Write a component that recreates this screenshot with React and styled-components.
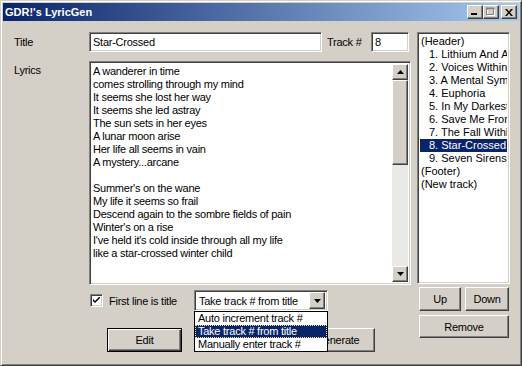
import React from "react";
import styled, { createGlobalStyle } from "styled-components";

const GlobalStyle = createGlobalStyle`
  html, body {
    margin: 0;
    padding: 0;
    background: #d4d0c8;
  }
  body {
    font-family: "Liberation Sans", Arial, sans-serif;
    font-size: 11px;
    letter-spacing: -0.25px;
    color: #000;
  }
`;

const raised = `
  border: 1px solid;
  border-color: #fff #404040 #404040 #fff;
  box-shadow: inset -1px -1px #808080, inset 1px 1px #d4d0c8;
  background: #d4d0c8;
`;

const sunken = `
  border: 1px solid;
  border-color: #808080 #fff #fff #808080;
  box-shadow: inset 1px 1px #404040, inset -1px -1px #d4d0c8;
`;

const Window = styled.div`
  width: 522px;
  height: 366px;
  box-sizing: border-box;
  background: #d4d0c8;
  border: 1px solid;
  border-color: #d4d0c8 #404040 #404040 #d4d0c8;
  box-shadow: inset 1px 1px #fff, inset -1px -1px #808080;
  padding: 2px;
  display: flex;
  flex-direction: column;
`;

const TitleBar = styled.div`
  height: 18px;
  flex: none;
  margin-bottom: 1px;
  padding: 0 2px 0 2px;
  display: flex;
  align-items: center;
  background: linear-gradient(to right, #0a246a, #a6caf0);
`;

const TitleText = styled.div`
  flex: 1;
  color: #fff;
  font-weight: bold;
  font-size: 11px;
  letter-spacing: 0;
`;

const CaptionButton = styled.div`
  width: 16px;
  height: 14px;
  box-sizing: border-box;
  margin-left: ${(p) => (p.gap ? "2px" : "0")};
  display: flex;
  align-items: center;
  justify-content: center;
  ${raised}
`;

const Client = styled.div`
  flex: 1;
  display: flex;
  padding: 10px 8px 0 11px;
`;

const LeftPane = styled.div`
  width: 397px;
  display: flex;
  flex-direction: column;
`;

const Row = styled.div`
  display: flex;
  align-items: ${(p) => p.align || "center"};
  height: ${(p) => p.h}px;
  margin-top: ${(p) => p.mt || 0}px;
  padding-left: ${(p) => p.pl || 0}px;
`;

const Label = styled.div`
  width: ${(p) => p.w}px;
  flex: none;
  padding-top: ${(p) => p.pt || 0}px;
  margin-left: ${(p) => p.ml || 0}px;
`;

const TextBox = styled.div`
  width: ${(p) => p.w}px;
  height: 20px;
  box-sizing: border-box;
  background: #fff;
  padding: 3px 0 0 3px;
  white-space: nowrap;
  ${sunken}
`;

const TextArea = styled.div`
  width: 322px;
  height: 224px;
  box-sizing: border-box;
  background: #fff;
  padding: 2px;
  display: flex;
  ${sunken}
`;

const LyricsText = styled.div`
  flex: 1;
  overflow: hidden;
  padding: 1px 0 0 1px;
  line-height: 13px;
  white-space: pre;
`;

const ScrollBar = styled.div`
  width: 16px;
  display: flex;
  flex-direction: column;
  background: #ebe9e5;
`;

const ScrollButton = styled.div`
  height: ${(p) => p.h || 16}px;
  box-sizing: border-box;
  display: flex;
  align-items: center;
  justify-content: center;
  ${raised}
`;

const ScrollTrack = styled.div`
  flex: 1;
`;

const CheckBox = styled.div`
  width: 13px;
  height: 13px;
  box-sizing: border-box;
  background: #fff;
  display: flex;
  align-items: center;
  justify-content: center;
  ${sunken}
`;

const CheckLabel = styled.div`
  margin-left: 6px;
  width: 85px;
`;

const ComboWrap = styled.div`
  position: relative;
  width: 134px;
  height: 21px;
`;

const ComboField = styled.div`
  height: 21px;
  box-sizing: border-box;
  background: #fff;
  padding: 2px;
  display: flex;
  align-items: center;
  ${sunken}
`;

const ComboValue = styled.div`
  flex: 1;
  padding-left: 2px;
  white-space: nowrap;
  overflow: hidden;
`;

const DropButton = styled.div`
  width: 16px;
  height: 17px;
  box-sizing: border-box;
  display: flex;
  align-items: center;
  justify-content: center;
  ${raised}
`;

const DropList = styled.div`
  position: absolute;
  top: 100%;
  left: 0;
  width: 134px;
  box-sizing: border-box;
  border: 1px solid #000;
  background: #fff;
  z-index: 2;
`;

const DropItem = styled.div`
  height: 13px;
  line-height: 13px;
  padding-left: 3px;
  white-space: nowrap;
  background: ${(p) => (p.selected ? "#0a246a" : "#fff")};
  color: ${(p) => (p.selected ? "#fff" : "#000")};
  outline: ${(p) => (p.selected ? "1px dotted #f0e68c" : "none")};
  outline-offset: -1px;
`;

const Button = styled.div`
  width: ${(p) => p.w}px;
  height: ${(p) => p.h || 24}px;
  box-sizing: border-box;
  margin-left: ${(p) => p.ml || 0}px;
  display: flex;
  align-items: center;
  justify-content: center;
  ${raised}
  ${(p) =>
    p.isDefault &&
    `
    border: 1px solid #000;
    box-shadow: inset 1px 1px #fff, inset -1px -1px #404040, inset -2px -2px #808080;
  `}
`;

const RightPane = styled.div`
  width: 93px;
  margin-left: 6px;
  display: flex;
  flex-direction: column;
`;

const ListBox = styled.div`
  height: 252px;
  box-sizing: border-box;
  background: #fff;
  padding: 2px;
  overflow: hidden;
  ${sunken}
`;

const ListItem = styled.div`
  height: 13px;
  line-height: 13px;
  padding-left: ${(p) => (p.indent ? 9 : 1)}px;
  white-space: nowrap;
  overflow: hidden;
  letter-spacing: 0;
  background: ${(p) => (p.selected ? "#0a246a" : "transparent")};
  color: ${(p) => (p.selected ? "#fff" : "#000")};
`;

const ButtonRow = styled.div`
  display: flex;
  padding-left: 2px;
  margin-top: ${(p) => p.mt}px;
`;

const Arrow = ({ down }) => (
  <svg width="7" height="4" viewBox="0 0 7 4">
    <path d={down ? "M0 0h7L3.5 4z" : "M0 4h7L3.5 0z"} fill="#000" />
  </svg>
);

const lyrics = [
  "A wanderer in time",
  "comes strolling through my mind",
  "It seems she lost her way",
  "It seems she led astray",
  "The sun sets in her eyes",
  "A lunar moon arise",
  "Her life all seems in vain",
  "A mystery...arcane",
  "",
  "Summer's on the wane",
  "My life it seems so frail",
  "Descend again to the sombre fields of pain",
  "Winter's on a rise",
  "I've held it's cold inside through all my life",
  "like a star-crossed winter child",
];

// names as far as the list box shows them
const tracks = [
  { text: "(Header)" },
  { text: "1. Lithium And A", indent: true },
  { text: "2. Voices Within", indent: true },
  { text: "3. A Mental Sym", indent: true },
  { text: "4. Euphoria", indent: true },
  { text: "5. In My Darkest", indent: true },
  { text: "6. Save Me From", indent: true },
  { text: "7. The Fall Withi", indent: true },
  { text: "8. Star-Crossed", indent: true, selected: true },
  { text: "9. Seven Sirens", indent: true },
  { text: "(Footer)" },
  { text: "(New track)" },
];

const modes = [
  "Auto increment track #",
  "Take track # from title",
  "Manually enter track #",
];

export default function App() {
  return (
    <>
      <GlobalStyle />
      <Window>
        <TitleBar>
          <TitleText>GDR!'s LyricGen</TitleText>
          <CaptionButton>
            <svg width="8" height="8" viewBox="0 0 8 8">
              <rect x="0" y="5" width="6" height="2" fill="#000" />
            </svg>
          </CaptionButton>
          <CaptionButton>
            <svg width="10" height="10" viewBox="0 0 10 10">
              <path d="M1.5 2.5h7v6h-7z" fill="none" stroke="#fff" />
              <path d="M0.5 1.5h7v6h-7z M0 1h8v1H0z" fill="none" stroke="#808080" />
            </svg>
          </CaptionButton>
          <CaptionButton gap>
            <svg width="8" height="7" viewBox="0 0 8 7">
              <path d="M0 0h2l2 2.5L6 0h2L5 3.5 8 7H6L4 4.5 2 7H0l3-3.5z" fill="#000" />
            </svg>
          </CaptionButton>
        </TitleBar>
        <Client>
          <LeftPane>
            <Row h={20}>
              <Label w={75}>Title</Label>
              <TextBox w={233}>Star-Crossed</TextBox>
              <Label w={44} ml={5}>
                Track #
              </Label>
              <TextBox w={38}>8</TextBox>
            </Row>
            <Row h={224} mt={9} align="flex-start">
              <Label w={75} pt={3}>
                Lyrics
              </Label>
              <TextArea>
                <LyricsText>{lyrics.join("\n")}</LyricsText>
                <ScrollBar>
                  <ScrollButton>
                    <Arrow />
                  </ScrollButton>
                  <ScrollButton h={85} />
                  <ScrollTrack />
                  <ScrollButton>
                    <Arrow down />
                  </ScrollButton>
                </ScrollBar>
              </TextArea>
            </Row>
            <Row h={21} mt={5} pl={76}>
              <CheckBox>
                <svg width="7" height="7" viewBox="0 0 7 7">
                  <path d="M0 2l2 2L7 -1v2L2 6 0 4z" fill="#000" />
                </svg>
              </CheckBox>
              <CheckLabel>First line is title</CheckLabel>
              <ComboWrap>
                <ComboField>
                  <ComboValue>Take track # from title</ComboValue>
                  <DropButton>
                    <Arrow down />
                  </DropButton>
                </ComboField>
                <DropList>
                  {modes.map((m, i) => (
                    <DropItem key={m} selected={i === 1}>
                      {m}
                    </DropItem>
                  ))}
                </DropList>
              </ComboWrap>
            </Row>
            <Row h={24} mt={17}>
              <Button w={75} ml={93} isDefault>
                Edit
              </Button>
              <Button w={75} ml={118}>
                Generate
              </Button>
            </Row>
          </LeftPane>
          <RightPane>
            <ListBox>
              {tracks.map((t) => (
                <ListItem key={t.text} indent={t.indent} selected={t.selected}>
                  {t.text}
                </ListItem>
              ))}
            </ListBox>
            <ButtonRow mt={3}>
              <Button w={42}>Up</Button>
              <Button w={44} ml={4}>
                Down
              </Button>
            </ButtonRow>
            <ButtonRow mt={4}>
              <Button w={90} h={23}>
                Remove
              </Button>
            </ButtonRow>
          </RightPane>
        </Client>
      </Window>
    </>
  );
}
